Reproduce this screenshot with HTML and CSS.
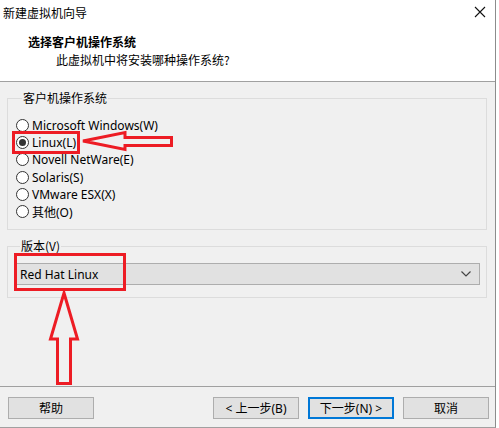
FILE: index.html
```html
<!DOCTYPE html>
<html>
<head>
<meta charset="utf-8">
<link rel="stylesheet" href="styles.css">
</head>
<body>
<div class="dialog">
  <div class="header">
    <div class="titlebar">
      <span class="title">新建虚拟机向导</span>
      <svg class="close" width="12" height="12" viewBox="0 0 12 12"><path d="M1 1L11 11M11 1L1 11" stroke="#111" stroke-width="1.1" fill="none"/></svg>
    </div>
    <div class="heading">选择客户机操作系统</div>
    <div class="subheading">此虚拟机中将安装哪种操作系统?</div>
  </div>
  <div class="body">
    <fieldset class="group group-os">
      <legend>客户机操作系统</legend>
      <div class="radio"><span class="dot"></span><span>Microsoft Windows(W)</span></div>
      <div class="radio checked"><span class="dot"></span><span>Linux(L)</span></div>
      <div class="radio"><span class="dot"></span><span>Novell NetWare(E)</span></div>
      <div class="radio"><span class="dot"></span><span>Solaris(S)</span></div>
      <div class="radio"><span class="dot"></span><span>VMware ESX(X)</span></div>
      <div class="radio"><span class="dot"></span><span>其他(O)</span></div>
    </fieldset>
    <fieldset class="group group-ver">
      <legend>版本(V)</legend>
      <div class="combo"><span>Red Hat Linux</span>
        <svg width="10" height="6" viewBox="0 0 10 6"><path d="M0.5 0.5L5 5L9.5 0.5" stroke="#444" stroke-width="1.2" fill="none"/></svg>
      </div>
    </fieldset>
  </div>
  <div class="footer">
    <div class="btn">帮助</div>
    <div class="spacer"></div>
    <div class="btn">&lt; 上一步(B)</div>
    <div class="btn primary">下一步(N) &gt;</div>
    <div class="btn">取消</div>
  </div>
  <svg class="annot" width="499" height="428" viewBox="0 0 499 428">
    <g fill="none" stroke="#ed1c24" stroke-width="3" stroke-linejoin="miter">
      <rect x="13.5" y="132.5" width="65" height="20"/>
      <path d="M83 141L125 132.5V137.5H171.5V145.5H125V149.5Z"/>
      <rect x="15.5" y="254.5" width="109" height="35"/>
      <path d="M64 293L77.5 339H70.5V383.5H57.5V339H50.5Z"/>
    </g>
  </svg>
</div>
</body>
</html>
```
FILE: styles.css
```css
html, body {
  margin: 0;
  padding: 0;
  background: #ffffff;
}
body {
  font-family: "Noto Sans", "Noto Sans CJK SC", sans-serif;
  font-size: 12px;
  color: #000;
}
.dialog {
  position: relative;
  width: 495px;
  height: 427px;
  background: #f0f0f0;
  border-right: 1px solid #8c8c8c;
  border-bottom: 1px solid #a0a0a0;
  display: flex;
  flex-direction: column;
}
.header {
  background: #fff;
  height: 82px;
  border-bottom: 1px solid #a0a0a0;
  box-sizing: border-box;
}
.titlebar {
  height: 27px;
  display: flex;
  align-items: center;
  justify-content: space-between;
  padding: 0 9px 0 3px;
}
.title {
  font-family: "Noto Sans CJK SC", sans-serif;
  font-size: 12px;
  line-height: 14px;
  margin-top: -1px;
}
.close {
  margin-top: -3px;
}
.heading {
  font-family: "Noto Sans CJK SC", sans-serif;
  font-weight: bold;
  font-size: 12px;
  line-height: 17px;
  padding-left: 28px;
  margin-top: 6px;
}
.subheading {
  font-family: "Noto Sans CJK SC", sans-serif;
  font-size: 12px;
  line-height: 17px;
  padding-left: 56px;
  margin-top: 1px;
}
.body {
  flex: 1;
  padding: 9px 8px 0 7px;
  border-bottom: 1px solid #a0a0a0;
}
.group {
  margin: 0;
  border: 1px solid #dcdcdc;
  padding: 0;
  min-width: 0;
}
.group legend {
  margin-left: 6px;
  padding: 0 1px;
  font-family: "Noto Sans CJK SC", sans-serif;
  line-height: 14px;
}
.group-os {
  height: 139px;
  box-sizing: border-box;
  padding: 12px 0 0 8px;
}
.radio {
  display: flex;
  align-items: center;
  height: 17.2px;
  font-family: "Noto Sans", "Noto Sans CJK SC", sans-serif;
  letter-spacing: 0;
}
.radio .dot {
  width: 11px;
  height: 11px;
  border: 1px solid #333;
  border-radius: 50%;
  background: #fff;
  margin-right: 3px;
  display: flex;
  align-items: center;
  justify-content: center;
  flex: none;
}
.radio.checked .dot::after {
  content: "";
  width: 7px;
  height: 7px;
  border-radius: 50%;
  background: #333;
}
.group-ver {
  margin-top: 9px;
  height: 59px;
  box-sizing: border-box;
  padding: 10px 6px 0 6px;
}
.combo {
  height: 22px;
  box-sizing: border-box;
  border: 1px solid #adadad;
  background: #e1e1e1;
  display: flex;
  align-items: center;
  justify-content: space-between;
  padding: 0 8px 0 5px;
}
.footer {
  height: 40px;
  display: flex;
  align-items: center;
  padding: 0 6px 0 8px;
  gap: 9px;
}
.spacer {
  flex: 1;
}
.btn {
  width: 86px;
  height: 22px;
  box-sizing: border-box;
  border: 1px solid #adadad;
  background: #e1e1e1;
  display: flex;
  align-items: center;
  justify-content: center;
  font-family: "Noto Sans", "Noto Sans CJK SC", sans-serif;
  margin-top: 1px;
}
.btn.primary {
  border: 2px solid #0078d7;
}
.annot {
  position: absolute;
  left: 0;
  top: 0;
  pointer-events: none;
}
```
